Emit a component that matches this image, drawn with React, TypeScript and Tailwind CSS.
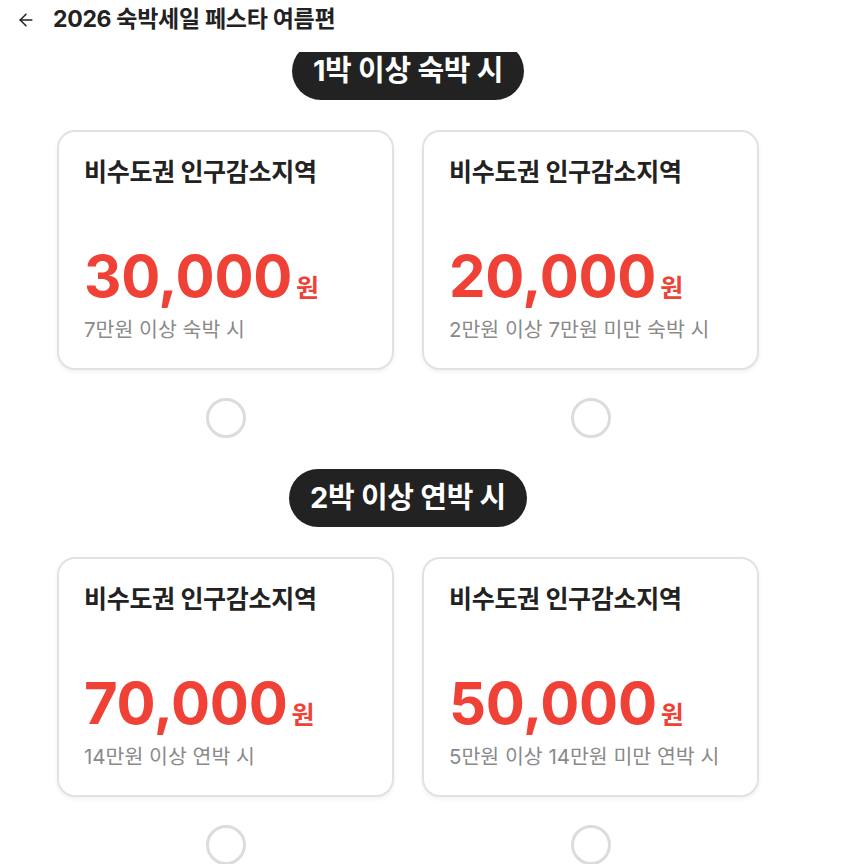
import React from "react";
import { ArrowLeft } from "lucide-react";

type Offer = {
  region: string;
  amount: string;
  condition: string;
};

type Section = {
  label: string;
  offers: Offer[];
};

const sections: Section[] = [
  {
    label: "1박 이상 숙박 시",
    offers: [
      { region: "비수도권 인구감소지역", amount: "30,000", condition: "7만원 이상 숙박 시" },
      { region: "비수도권 인구감소지역", amount: "20,000", condition: "2만원 이상 7만원 미만 숙박 시" },
    ],
  },
  {
    label: "2박 이상 연박 시",
    offers: [
      { region: "비수도권 인구감소지역", amount: "70,000", condition: "14만원 이상 연박 시" },
      { region: "비수도권 인구감소지역", amount: "50,000", condition: "5만원 이상 14만원 미만 연박 시" },
    ],
  },
];

const OfferCard: React.FC<{ offer: Offer }> = ({ offer }) => (
  <div className="flex flex-col items-center">
    <div className="w-[337px] h-[240px] rounded-[18px] border-2 border-[#e2e2e2] bg-white shadow-[0_2px_4px_rgba(0,0,0,0.06)] px-[25px] pt-[23px]">
      <div className="text-[25px] font-bold text-[#222] leading-[34px] tracking-[-0.3px]">
        {offer.region}
      </div>
      <div className="mt-[55px] flex items-baseline text-[#ef4136] font-bold">
        <span className="text-[58px] leading-[64px] tracking-[-0.3px]">{offer.amount}</span>
        <span className="text-[25px] ml-[4px]">원</span>
      </div>
      <div className="mt-[7px] text-[20.5px] text-[#8a8a8a] leading-[30px]">
        {offer.condition}
      </div>
    </div>
    <div className="mt-[28px] w-[40px] h-[40px] rounded-full border-[3px] border-[#dcdcdc] bg-white" />
  </div>
);

const App: React.FC = () => {
  return (
    <div
      className="min-h-screen bg-white"
      style={{ fontFamily: "Inter, 'Noto Sans CJK KR', sans-serif" }}
    >
      {/* Header */}
      <div className="fixed top-0 left-0 right-0 z-10 h-[52px] bg-white flex items-start pt-[4px] pl-[16px]">
        <ArrowLeft size={20} strokeWidth={1.8} className="text-[#222] mt-[6px]" />
        <h1 className="ml-[17px] text-[23px] font-bold text-[#222] leading-[30px] tracking-[-0.3px]">
          2026 숙박세일 페스타 여름편
        </h1>
      </div>

      <div className="w-[816px] pt-[42px] flex flex-col items-center">
        {sections.map((section, i) => (
          <div key={i} className={`flex flex-col items-center ${i > 0 ? "mt-[31px]" : ""}`}>
            <div className="h-[58px] px-[21px] rounded-full bg-[#222] text-white text-[29px] font-bold flex items-center tracking-[-0.3px]">
              {section.label}
            </div>
            <div className="mt-[30px] grid grid-cols-2 gap-x-[28px]">
              {section.offers.map((offer, j) => (
                <OfferCard key={j} offer={offer} />
              ))}
            </div>
          </div>
        ))}
      </div>
    </div>
  );
};

export default App;
